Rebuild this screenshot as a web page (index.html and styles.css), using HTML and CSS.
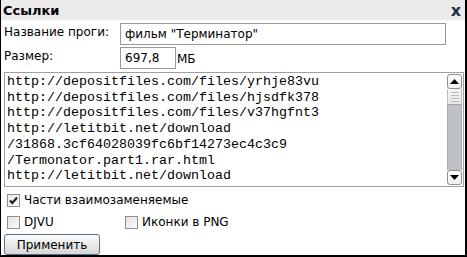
FILE: index.html
```html
<!DOCTYPE html>
<html>
<head>
<meta charset="utf-8">
<link rel="stylesheet" href="styles.css">
</head>
<body>
<div class="frame">
  <div class="title">
    <span class="title-text">Ссылки</span>
    <span class="close">x</span>
  </div>
  <div class="form">
    <div class="row">
      <span class="label">Название проги:</span>
      <div class="input wide">фильм "Терминатор"</div>
    </div>
    <div class="row">
      <span class="label">Размер:</span>
      <div class="input narrow">697,8</div>
      <span class="unit">МБ</span>
    </div>
    <div class="links">
      <div class="links-text">http://depositfiles.com/files/yrhje83vu
http://depositfiles.com/files/hjsdfk378
http://depositfiles.com/files/v37hgfnt3
http://letitbit.net/download
/31868.3cf64028039fc6bf14273ec4c3c9
/Termonator.part1.rar.html
http://letitbit.net/download</div>
      <div class="scrollbar">
        <div class="sb-btn"><svg width="9" height="5" viewBox="0 0 9 5"><path d="M0 5 L4.5 0 L9 5 Z" fill="#000"/></svg></div>
        <div class="sb-thumb"><span></span><span></span><span></span><span></span></div>
        <div class="sb-track"></div>
        <div class="sb-btn"><svg width="9" height="5" viewBox="0 0 9 5"><path d="M0 0 L9 0 L4.5 5 Z" fill="#000"/></svg></div>
      </div>
    </div>
    <div class="checks">
      <label class="check"><span class="box checked"><svg width="11" height="11" viewBox="0 0 11 11"><path d="M2 5.5 L4.3 8 L9 2.5" stroke="#222" stroke-width="2.2" fill="none"/></svg></span>Части взаимозаменяемые</label>
      <div class="check-row">
        <label class="check first"><span class="box"></span>DJVU</label>
        <label class="check"><span class="box"></span>Иконки в PNG</label>
      </div>
    </div>
    <button class="apply">Применить</button>
  </div>
</div>
</body>
</html>
```
FILE: styles.css
```css
* { box-sizing: border-box; }
html, body { margin: 0; padding: 0; background: #fff; }
body { font-family: "DejaVu Sans", Verdana, sans-serif; font-size: 12px; color: #000; }
.frame {
  width: 467px; height: 257px;
  border-left: 1px solid #000; border-right: 2px solid #000; border-bottom: 2px solid #000;
  background: #fff;
  display: flex; flex-direction: column;
}
.title {
  height: 20px; background: #ebebeb;
  display: flex; align-items: center; justify-content: space-between;
  padding: 0 4px 0 2px;
}
.title-text { font-weight: bold; font-size: 13px; }
.close { font-weight: bold; font-size: 16px; color: #1e2c44; line-height: 1; margin-top: 1px; }
.form { padding: 3px 0 0 3px; display: flex; flex-direction: column; }
.row { display: flex; align-items: flex-start; height: 22px; margin-bottom: 2px; }
.label { width: 116px; line-height: 14px; padding-top: 2px; }
.input {
  height: 22px; border: 1px solid #999; padding: 3px 4px; line-height: 14px; font-size: 12px;
}
.wide { width: 326px; }
.narrow { width: 56px; }
.unit { padding-top: 5px; line-height: 14px; margin-left: 1px; }
.links {
  margin-top: 1px; width: 460px; height: 115px;
  border: 1px solid #a0a0a0; display: flex;
}
.links-text {
  flex: 1; white-space: pre; overflow: hidden;
  font-family: "Liberation Mono", "Courier New", monospace; font-size: 13.33px; line-height: 15.7px;
  padding: 1px 0 0 2px;
}
.scrollbar { width: 16px; display: flex; flex-direction: column; padding: 1px 1px 1px 0; }
.sb-btn {
  height: 15px; border: 1px solid #8a8f94; border-radius: 3px; background: linear-gradient(#fff, #eef0f2);
  display: flex; align-items: center; justify-content: center;
}
.sb-thumb {
  height: 16px; background: linear-gradient(#f6f7f8, #e3e6e8); border-left: 1px solid #b8bcc0; border-right: 1px solid #b8bcc0; border-bottom: 1px solid #9ea3a8;
  display: flex; flex-direction: column; justify-content: center; align-items: center; gap: 2px;
}
.sb-thumb span { width: 8px; height: 1px; background: #b9bdc1; }
.sb-track { flex: 1; background: #bec2c6; border-left: 1px solid #a9adb1; border-right: 1px solid #a9adb1; }
.checks { padding: 6px 0 0 3px; display: flex; flex-direction: column; gap: 8px; }
.check { display: flex; align-items: center; height: 14px; line-height: 14px; }
.check-row { display: flex; }
.check.first { width: 118px; }
.box {
  width: 13px; height: 13px; border: 1px solid #8f8f8f; background: linear-gradient(135deg, #e2e2e2, #fbfbfb);
  margin-right: 4px; display: flex; align-items: center; justify-content: center;
}
.box.checked { background: linear-gradient(135deg, #e8e8e8, #fff); }
.apply {
  margin-top: 5px; width: 96px; height: 21px;
  border: 1px solid #5b7086; border-radius: 3px;
  background: linear-gradient(#fdfdfd, #e6e6e6 60%, #d6d6d6);
  font-family: "DejaVu Sans", Verdana, sans-serif; font-size: 12px; color: #000; padding: 0;
}
```
